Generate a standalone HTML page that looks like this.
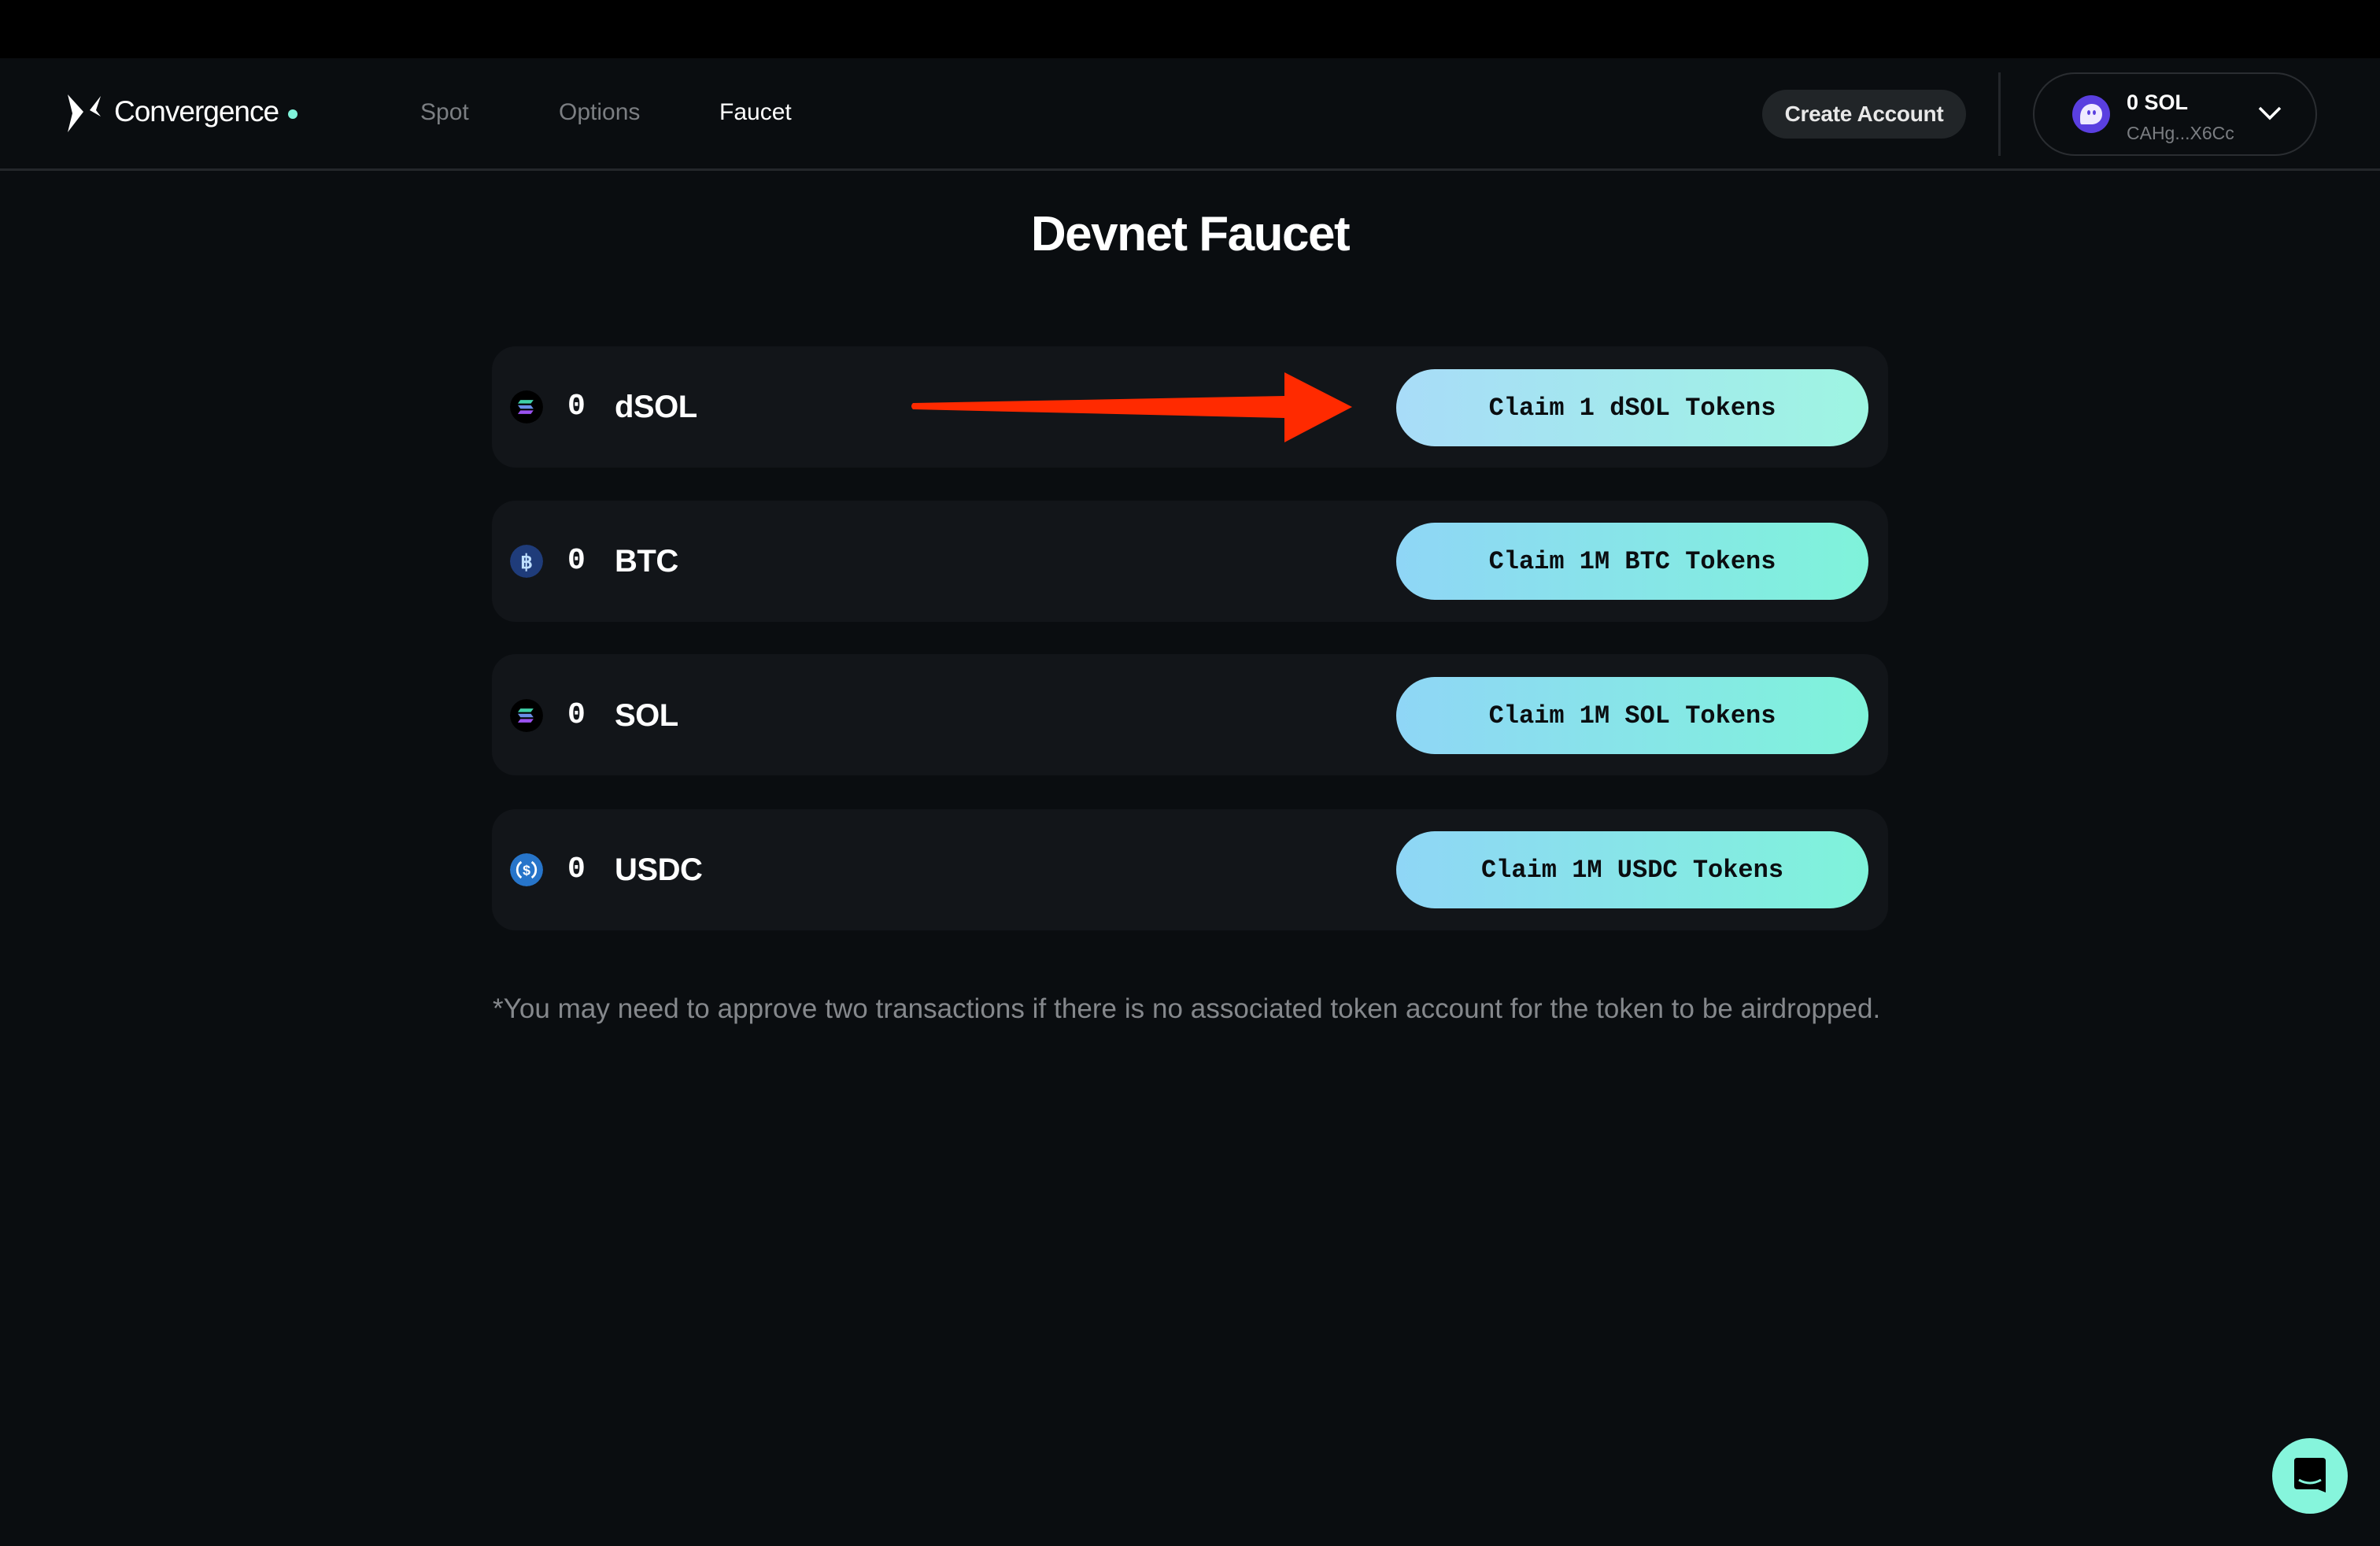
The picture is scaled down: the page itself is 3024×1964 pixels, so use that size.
<!DOCTYPE html>
<html><head><meta charset="utf-8"><style>
*{margin:0;padding:0;box-sizing:border-box}
body{width:3024px;height:1964px;background:#0a0d10;font-family:"Liberation Sans",sans-serif;position:relative;overflow:hidden;color:#fff}
.top{position:absolute;left:0;top:0;width:3024px;height:74px;background:#000}
.hdr{position:absolute;left:0;top:74px;width:3024px;height:143px;border-bottom:3px solid #24272b;background:#0a0d10}
.abs{position:absolute}
.nav{position:absolute;top:126px;font-size:30px;color:#7b7e82}
.row{position:absolute;left:625px;width:1774px;height:154px;background:#121519;border-radius:30px}
.ico{position:absolute;left:648px;width:42px;height:42px;border-radius:50%}
.amt{position:absolute;left:721px;font-family:"Liberation Mono",monospace;font-weight:bold;font-size:38px;line-height:40px}
.sym{position:absolute;left:781px;font-weight:bold;font-size:40px;line-height:40px;letter-spacing:-0.5px}
.btn{position:absolute;left:1774px;width:600px;height:98px;border-radius:49px;background:linear-gradient(90deg,#8fd6f6,#7ff3da);color:#0a0d10;font-family:"Liberation Mono",monospace;font-weight:bold;font-size:32px;display:flex;align-items:center;justify-content:center;white-space:pre}
</style></head><body>
<div class="top"></div>
<div class="hdr"></div>
<svg class="abs" style="left:84px;top:118px" width="46" height="52" viewBox="0 0 46 52"><path d="M2 2 L22 24 L2 50 L8 26 Z M44 4 L30 22 L44 30 L38 22 Z" fill="#fff"/></svg>
<div class="abs" style="left:145px;top:121px;font-size:37px;letter-spacing:-1px">Convergence</div>
<div class="abs" style="left:366px;top:139px;width:12px;height:12px;border-radius:50%;background:#7ff3da"></div>
<div class="nav" style="left:534px">Spot</div>
<div class="nav" style="left:710px">Options</div>
<div class="nav" style="left:914px;color:#fff">Faucet</div>
<div class="abs" style="left:2239px;top:114px;width:259px;height:62px;border-radius:31px;background:#212528;font-weight:bold;font-size:28px;color:#e8e8e8;display:flex;align-items:center;justify-content:center;letter-spacing:-0.3px">Create Account</div>
<div class="abs" style="left:2539px;top:92px;width:3px;height:106px;background:#24272b"></div>
<div class="abs" style="left:2583px;top:92px;width:361px;height:106px;border-radius:53px;border:2px solid #2a2d31"></div>
<svg class="abs" style="left:2633px;top:121px" width="48" height="48" viewBox="0 0 48 48"><circle cx="24" cy="24" r="24" fill="#5a3fe0"/><path d="M10 28 C10 16 18 11 25 11 C33 11 38 17 38 24 C38 32 32 37 24 37 L12 37 C10 37 10 34 10 28Z" fill="#efeaff"/><ellipse cx="21" cy="22" rx="2" ry="3" fill="#5a3fe0"/><ellipse cx="28" cy="22" rx="2" ry="3" fill="#5a3fe0"/></svg>
<div class="abs" style="left:2702px;top:115px;font-weight:bold;font-size:27px">0 SOL</div>
<div class="abs" style="left:2702px;top:156px;font-size:23px;color:#7b7e82">CAHg...X6Cc</div>
<svg class="abs" style="left:2868px;top:133px" width="32" height="22" viewBox="0 0 32 22"><path d="M3 4 L16 17 L29 4" stroke="#fff" stroke-width="3.5" fill="none"/></svg>
<div class="abs" style="left:0;width:3024px;top:262px;text-align:center;font-weight:bold;font-size:62px;letter-spacing:-1.5px">Devnet Faucet</div>

<div class="row" style="top:440px"></div>
<div class="row" style="top:636px"></div>
<div class="row" style="top:831px"></div>
<div class="row" style="top:1028px"></div>

<svg class="ico" style="top:496px" viewBox="0 0 38 38"><circle cx="19" cy="19" r="19" fill="#000"/><path d="M12 11h15l-3 4H9z" fill="#3fd0a8"/><path d="M9 17h15l3 4H12z" fill="#6b8ee8"/><path d="M12 23h15l-3 4H9z" fill="#9b52f0"/></svg>
<div class="amt" style="top:497px">0</div><div class="sym" style="top:497px">dSOL</div>
<div class="btn" style="top:469px;background:linear-gradient(90deg,#a8dcf8,#9ef5e2)">Claim 1 dSOL Tokens</div>
<svg class="abs" style="left:1150px;top:465px" width="580" height="105" viewBox="0 0 580 105"><path d="M10 47 L482 38 L482 8 L568 52 L482 97 L482 66 L10 55 Q6 51 10 47Z" fill="#ff2a00"/></svg>

<svg class="ico" style="top:692px" viewBox="0 0 38 38"><circle cx="19" cy="19" r="19" fill="#1f3c7a"/><text x="19" y="27" font-size="22" font-weight="bold" text-anchor="middle" fill="#bfe0ff" font-family="Liberation Sans">฿</text></svg>
<div class="amt" style="top:693px">0</div><div class="sym" style="top:693px">BTC</div>
<div class="btn" style="top:664px">Claim 1M BTC Tokens</div>

<svg class="ico" style="top:888px" viewBox="0 0 38 38"><circle cx="19" cy="19" r="19" fill="#000"/><path d="M12 11h15l-3 4H9z" fill="#3fd0a8"/><path d="M9 17h15l3 4H12z" fill="#6b8ee8"/><path d="M12 23h15l-3 4H9z" fill="#9b52f0"/></svg>
<div class="amt" style="top:889px">0</div><div class="sym" style="top:889px">SOL</div>
<div class="btn" style="top:860px">Claim 1M SOL Tokens</div>

<svg class="ico" style="top:1084px" viewBox="0 0 38 38"><circle cx="19" cy="19" r="19" fill="#2775ca"/><path d="M13 10 A11 11 0 0 0 13 28 M25 10 A11 11 0 0 1 25 28" stroke="#fff" stroke-width="2.5" fill="none"/><text x="19" y="25" font-size="16" font-weight="bold" text-anchor="middle" fill="#fff" font-family="Liberation Sans">$</text></svg>
<div class="amt" style="top:1085px">0</div><div class="sym" style="top:1085px">USDC</div>
<div class="btn" style="top:1056px">Claim 1M USDC Tokens</div>

<div class="abs" style="left:626px;top:1262px;font-size:35px;color:#85888c;white-space:nowrap;letter-spacing:0.05px">*You may need to approve two transactions if there is no associated token account for the token to be airdropped.</div>

<div class="abs" style="left:2887px;top:1827px;width:96px;height:96px;border-radius:50%;background:#86f5dc"></div>
<svg class="abs" style="left:2913px;top:1850px" width="44" height="50" viewBox="0 0 44 50"><path d="M6 2 H38 Q42 2 42 6 V46 L32 42 H6 Q2 42 2 38 V6 Q2 2 6 2Z" fill="#000"/><path d="M8 30 Q22 38 36 30" stroke="#86f5dc" stroke-width="3" fill="none"/></svg>
</body></html>
